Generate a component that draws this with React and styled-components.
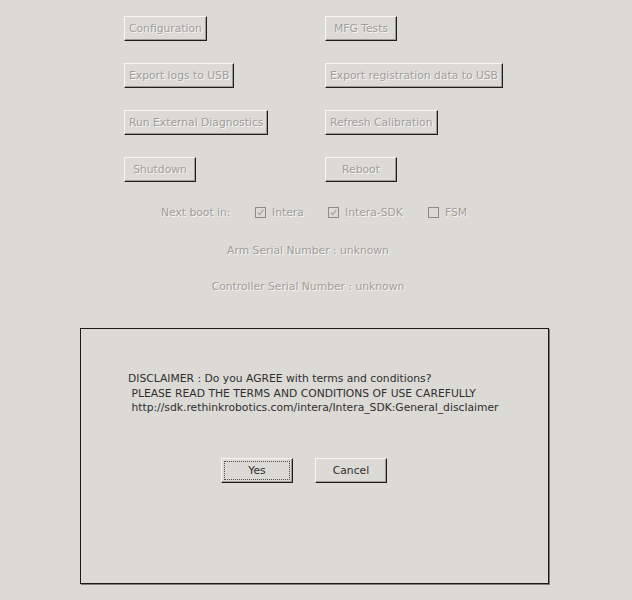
import React from "react";
import styled, { createGlobalStyle } from "styled-components";

const Global = createGlobalStyle`
  html, body { margin: 0; padding: 0; background: #dcdad5; }
  body { font-family: "DejaVu Sans", sans-serif; font-size: 10.75px; }
`;

const Page = styled.div`
  width: 632px;
  height: 600px;
  background: #dcdad5;
  overflow: hidden;
  display: flex;
  flex-direction: column;
`;

const ButtonGrid = styled.div`
  display: grid;
  grid-template-columns: 201px auto;
  grid-auto-rows: 25px;
  row-gap: 22px;
  padding: 16px 0 0 124px;
  justify-items: start;
`;

const Button = styled.button`
  box-sizing: border-box;
  height: 25px;
  min-width: 72px;
  padding: 0 4px;
  background: #dcdad5;
  font-family: "DejaVu Sans", sans-serif;
  font-size: 10.75px;
  color: ${(p) => (p.disabled ? "#a09e9a" : "#2e2e2e")};
  text-shadow: ${(p) => (p.disabled ? "1px 1px 0 #f6f6f4" : "none")};
  border-style: solid;
  border-width: 1px;
  border-color: #f7f7f5 #1e1e1e #1e1e1e #f7f7f5;
  box-shadow: inset -1px -1px 0 #9d9b96;
  border-radius: 0;
  outline: ${(p) => (p.$focused ? "1px dotted #4a4a4a" : "none")};
  outline-offset: -4px;
  white-space: nowrap;
`;

const BootRow = styled.div`
  display: grid;
  grid-template-columns: 94px 73px 100px auto;
  align-items: center;
  padding-left: 161px;
  margin-top: 23px;
  height: 14px;
  color: #a09e9a;
  text-shadow: 1px 1px 0 #f6f6f4;
`;

const CheckItem = styled.label`
  display: flex;
  align-items: center;
  gap: 6px;
`;

const Box = styled.span`
  box-sizing: border-box;
  width: 11px;
  height: 11px;
  border: 1px solid #8d8b86;
  background: #dcdad5;
  display: inline-flex;
  align-items: center;
  justify-content: center;
`;

const Info = styled.div`
  width: 616px;
  text-align: center;
  color: #a09e9a;
  text-shadow: 1px 1px 0 #f6f6f4;
  margin-top: ${(p) => p.$top}px;
  line-height: 14px;
`;

const Dialog = styled.div`
  box-sizing: border-box;
  margin: 34px 0 0 80px;
  width: 469px;
  height: 256px;
  border: 1px solid #1a1a1a;
  box-shadow: 1px 1px 0 #7d7b77;
  display: flex;
  flex-direction: column;
`;

const Message = styled.div`
  margin: 43px 0 0 47px;
  color: #2e2e2e;
  white-space: pre;
  line-height: 14.5px;
`;

const DialogButtons = styled.div`
  display: flex;
  gap: 22px;
  margin: 42px 0 0 140px;
`;

const Check = ({ checked }) => (
  <Box>
    {checked && (
      <svg width="7" height="7" viewBox="0 0 7 7">
        <path d="M0.8 3.6 L2.7 5.6 L6.3 0.9" fill="none" stroke="#a09e9a" strokeWidth="1.1" />
      </svg>
    )}
  </Box>
);

export default function App() {
  return (
    <Page>
      <Global />
      <ButtonGrid>
        <Button disabled>Configuration</Button>
        <Button disabled>MFG Tests</Button>
        <Button disabled>Export logs to USB</Button>
        <Button disabled>Export registration data to USB</Button>
        <Button disabled>Run External Diagnostics</Button>
        <Button disabled>Refresh Calibration</Button>
        <Button disabled>Shutdown</Button>
        <Button disabled>Reboot</Button>
      </ButtonGrid>
      <BootRow>
        <span>Next boot in:</span>
        <CheckItem><Check checked />Intera</CheckItem>
        <CheckItem><Check checked />Intera-SDK</CheckItem>
        <CheckItem><Check />FSM</CheckItem>
      </BootRow>
      <Info $top={25}>Arm Serial Number : unknown</Info>
      <Info $top={22}>Controller Serial Number : unknown</Info>
      <Dialog>
        <Message>
          {"DISCLAIMER : Do you AGREE with terms and conditions?\n PLEASE READ THE TERMS AND CONDITIONS OF USE CAREFULLY\n http://sdk.rethinkrobotics.com/intera/Intera_SDK:General_disclaimer"}
        </Message>
        <DialogButtons>
          <Button $focused>Yes</Button>
          <Button>Cancel</Button>
        </DialogButtons>
      </Dialog>
    </Page>
  );
}
